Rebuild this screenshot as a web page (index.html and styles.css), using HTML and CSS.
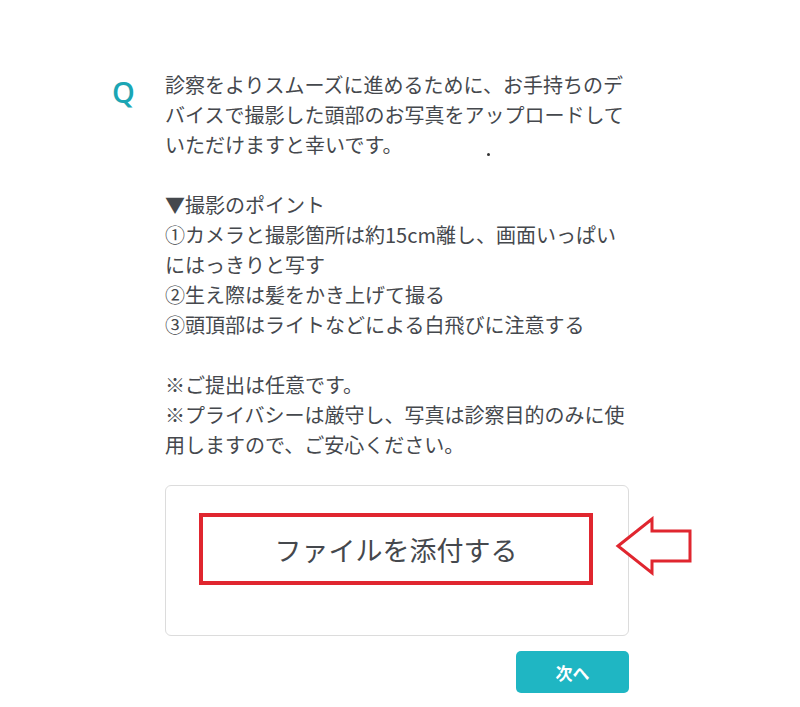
FILE: index.html
```html
<!DOCTYPE html>
<html>
	<head>
		<meta charset="utf-8">
		<title>写真のアップロード</title>
		<link rel="stylesheet" href="styles.css">
	</head>
	<body>
		<div class="question">
			<div class="q-mark">Q</div>
			<div class="q-body">
				<p class="q-text">
					診察をよりスムーズに進めるために、お手持ちのデ<br>
					バイスで撮影した頭部のお写真をアップロードして<br>
					いただけますと幸いです。<span class="dot"></span><br>
					<br>
					▼撮影のポイント<br>
					①カメラと撮影箇所は約15cm離し、画面いっぱい<br>
					にはっきりと写す<br>
					②生え際は髪をかき上げて撮る<br>
					③頭頂部はライトなどによる白飛びに注意する<br>
					<br>
					※ご提出は任意です。<br>
					※プライバシーは厳守し、写真は診察目的のみに使<br>
					用しますので、ご安心ください。
				</p>
				<div class="upload-row">
					<div class="upload">
						<a href="javascript:void(0)" class="upload-btn">ファイルを添付する</a>
					</div>
					<svg class="arrow" width="80" height="62" viewBox="0 0 80 62">
						<path d="M3 30 L37 3 L37 15 L75 15 L75 45 L37 45 L37 57 Z" fill="#fff" stroke="#e0262f" stroke-width="3" stroke-linejoin="miter"/>
					</svg>
				</div>
				<div class="actions">
					<a href="javascript:void(0)" class="next">次へ</a>
				</div>
			</div>
		</div>
	</body>
</html>
```

FILE: styles.css
```css
* {
	padding: 0;
	margin: 0;
	box-sizing: border-box;
}
a {
	text-decoration: none;
}
body {
	background: #fff;
	font-family: "Noto Sans CJK JP", "Noto Sans", sans-serif;
	color: #45484d;
}
.question {
	display: flex;
	padding: 70px 0 0 112px;
}
.q-mark {
	width: 53px;
	font-family: "Open Sans", "Noto Sans", sans-serif;
	font-size: 29px;
	font-weight: 600;
	line-height: 44px;
	color: #1ba6b4;
}
.q-text {
	font-size: 20px;
	line-height: 30px;
	white-space: nowrap;
}
.dot {
	display: inline-block;
	width: 3px;
	height: 3px;
	border-radius: 50%;
	background: #333;
	margin-left: 85px;
	vertical-align: -3px;
}
.upload-row {
	display: flex;
	align-items: center;
	margin-top: 25px;
}
.upload {
	width: 464px;
	height: 151px;
	border: 1px solid #dcdcdc;
	border-radius: 6px;
	padding: 27px 0 0 33px;
}
.upload-btn {
	display: flex;
	align-items: center;
	justify-content: center;
	width: 394px;
	height: 72px;
	border: 4px solid #e0262f;
	font-size: 27px;
	color: #45484d;
}
.arrow {
	margin: -27px 0 0 -14px;
}
.actions {
	display: flex;
	justify-content: flex-end;
	width: 464px;
	margin-top: 15px;
}
.next {
	display: flex;
	align-items: center;
	justify-content: center;
	width: 113px;
	height: 42px;
	border-radius: 5px;
	background: #1fb6c3;
	color: #fff;
	font-size: 17px;
	font-weight: 700;
}
```
